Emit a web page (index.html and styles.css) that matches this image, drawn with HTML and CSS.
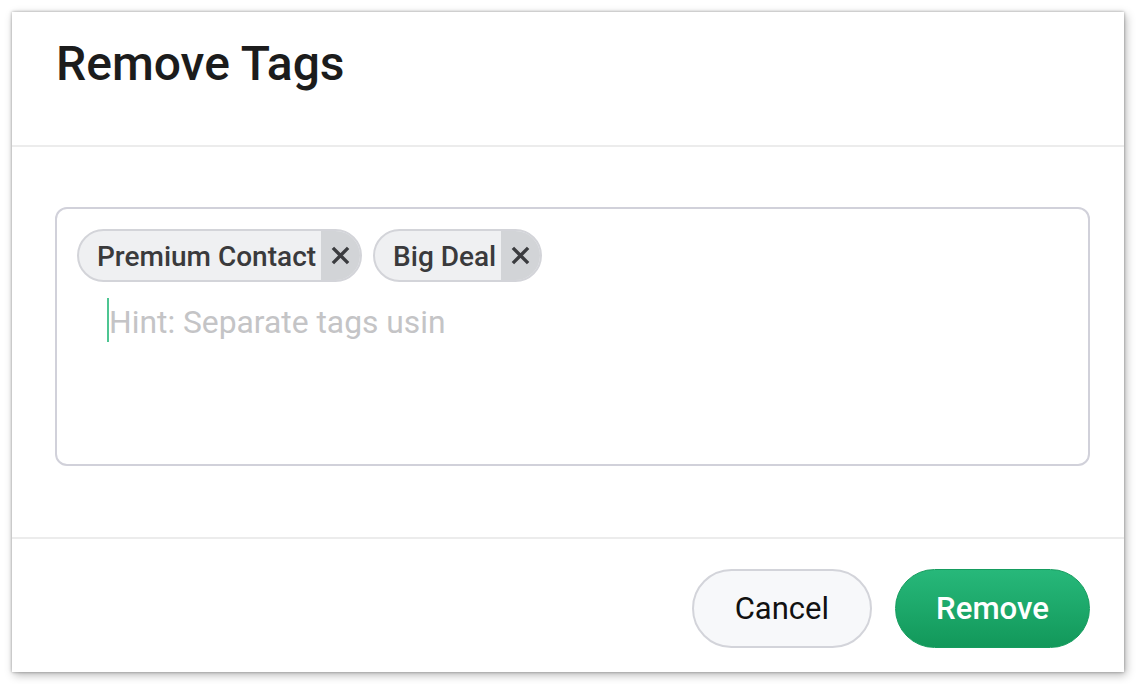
FILE: index.html
```html
<!DOCTYPE html>
<html lang="en">
<head>
<meta charset="utf-8">
<title>Remove Tags</title>
<link rel="stylesheet" href="styles.css">
</head>
<body>
<div class="dialog">
  <header class="dlg-head">
    <h1 class="dlg-title">Remove Tags</h1>
  </header>
  <div class="dlg-body">
    <div class="tag-box">
      <div class="chips">
        <span class="chip">
          <span class="chip-label">Premium Contact</span>
          <span class="chip-x"><svg viewBox="0 0 20 20" width="19" height="19"><path d="M2 2 L18 18 M18 2 L2 18" stroke="#3b3c3f" stroke-width="3.6" stroke-linecap="butt" fill="none"/></svg></span>
        </span>
        <span class="chip">
          <span class="chip-label">Big Deal</span>
          <span class="chip-x"><svg viewBox="0 0 20 20" width="19" height="19"><path d="M2 2 L18 18 M18 2 L2 18" stroke="#3b3c3f" stroke-width="3.6" stroke-linecap="butt" fill="none"/></svg></span>
        </span>
      </div>
      <div class="hint-row">
        <span class="caret"></span>
        <span class="hint">Hint: Separate tags usin</span>
      </div>
    </div>
  </div>
  <footer class="dlg-foot">
    <button class="btn btn-cancel">Cancel</button>
    <button class="btn btn-remove">Remove</button>
  </footer>
</div>
</body>
</html>
```

FILE: styles.css
```css
html, body {
  margin: 0;
  padding: 0;
  background: #ffffff;
}
body {
  padding: 12px;
  font-family: Roboto, "Noto Sans", "Liberation Sans", sans-serif;
}
.dialog {
  width: 1112px;
  height: 660px;
  background: #ffffff;
  box-shadow: 0 0 3px rgba(0,0,0,0.35), 2px 3px 9px rgba(0,0,0,0.28);
  display: flex;
  flex-direction: column;
}
.dlg-head {
  padding: 24px 44px 53px 44px;
  border-bottom: 2px solid #ececec;
}
.dlg-title {
  margin: 0;
  font-size: 48px;
  line-height: 56px;
  font-weight: 500;
  color: #1c1c1c;
}
.dlg-body {
  padding: 60px 34px 71px 43px;
}
.tag-box {
  height: 259px;
  box-sizing: border-box;
  border: 2px solid #d1d1da;
  border-radius: 12px;
  padding: 20px;
}
.chips {
  display: flex;
  gap: 11px;
}
.chip {
  display: flex;
  height: 53px;
  box-sizing: border-box;
  border: 2px solid #d3d4d9;
  border-radius: 27px;
  background: #eff0f2;
  overflow: hidden;
}
.chip-label {
  padding: 1px 5px 0 18px;
  font-size: 28px;
  line-height: 49px;
  font-weight: 500;
  color: #3a3a3c;
}
.chip-x {
  width: 39px;
  flex: none;
  background: #d2d4d7;
  display: flex;
  align-items: center;
  justify-content: center;
  padding-right: 1px;
  box-sizing: border-box;
}
.chip-x svg {
  flex: none;
}
.hint-row {
  display: flex;
  align-items: center;
  margin: 16px 0 0 30px;
  height: 44px;
}
.caret {
  width: 2px;
  height: 44px;
  background: #4ec592;
}
.hint {
  font-size: 31.8px;
  line-height: 44px;
  color: #c4c4c6;
  padding-top: 3px;
}
.dlg-foot {
  border-top: 2px solid #ececec;
  padding: 30px 34px 24px;
  display: flex;
  justify-content: flex-end;
  gap: 23px;
}
.btn {
  height: 79px;
  border-radius: 40px;
  font-family: Roboto, "Noto Sans", "Liberation Sans", sans-serif;
  cursor: pointer;
}
.btn-cancel {
  padding: 0 41px;
  font-size: 31px;
  background: #f7f8fa;
  border: 2px solid #d3d4da;
  color: #111111;
  font-weight: 400;
}
.btn-remove {
  padding: 0 40px;
  font-size: 31.2px;
  background: linear-gradient(#27b87a, #12985a);
  border: 1px solid #159c5e;
  color: #ffffff;
  font-weight: 500;
}
```
